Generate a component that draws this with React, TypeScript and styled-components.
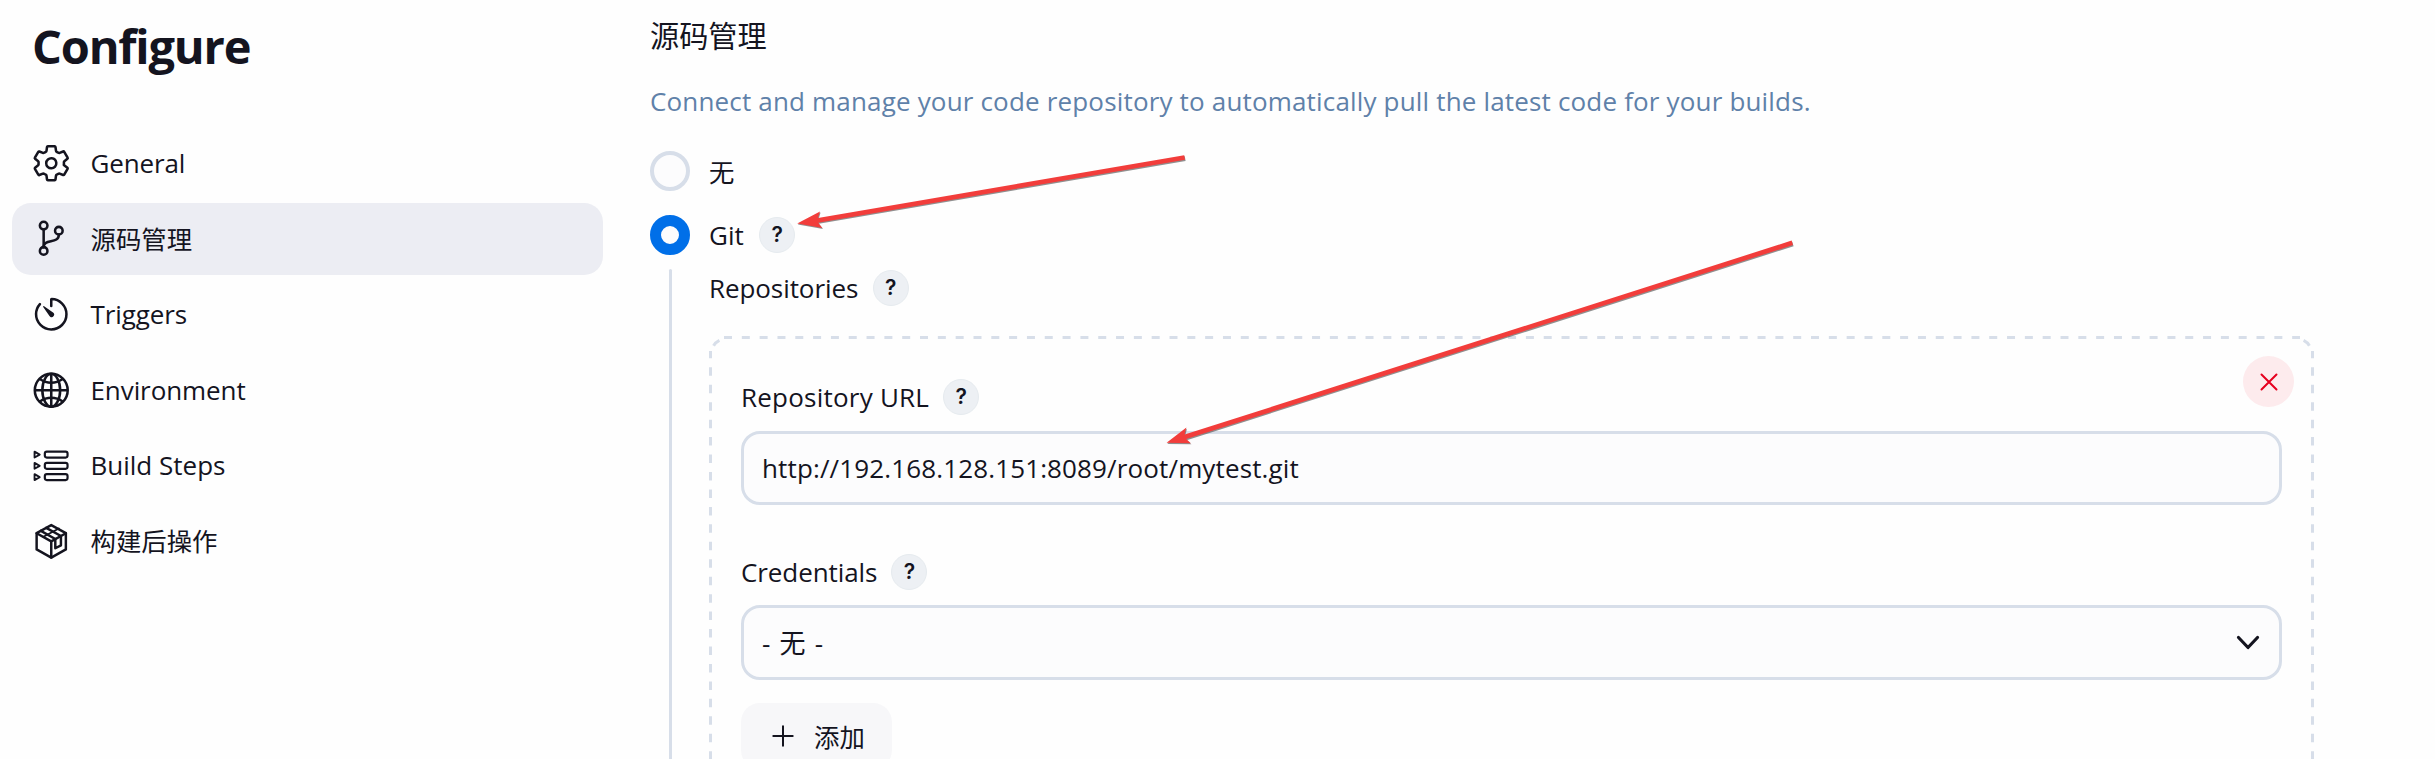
import React from 'react';
import styled, { createGlobalStyle } from 'styled-components';
import {
  IoSettingsOutline,
  IoGitBranchOutline,
  IoTimerOutline,
  IoGlobeOutline,
} from 'react-icons/io5';

const ink = '#14141f';
const line = '#d7dee9';
const sans = '"Open Sans", "Noto Sans CJK SC", sans-serif';

const GlobalStyle = createGlobalStyle`
  * { box-sizing: border-box; }
  body { margin: 0; background: #fefefe; overflow: hidden; }
`;

const Page = styled.div`
  position: relative;
  display: flex;
  width: 2435px;
  height: 759px;
  overflow: hidden;
  color: ${ink};
  font: 400 26px/36px ${sans};
`;

const Sidebar = styled.aside`
  flex: none;
  width: 650px;
  padding: 16px 47px 0 12px;
`;

const PageTitle = styled.h1`
  margin: 0 0 51px 20px;
  font-size: 47px;
  line-height: 60px;
  font-weight: 700;
  letter-spacing: -1.2px;
`;

const Nav = styled.nav`
  display: flex;
  flex-direction: column;
  gap: 3.6px;
`;

const NavItem = styled.a<{ $active?: boolean }>`
  display: flex;
  align-items: center;
  gap: 19px;
  height: 72px;
  padding-left: 19px;
  border-radius: 19px;
  background: ${(p) => (p.$active ? '#ecedf3' : 'transparent')};

  svg {
    flex: none;
    width: 40.5px;
    height: 40.5px;
  }
`;

const Text = styled.span<{ $spacing?: number; $cjk?: boolean }>`
  white-space: pre;
  letter-spacing: ${(p) => p.$spacing ?? 0}px;
  ${(p) => p.$cjk && 'font-size: 25.4px; padding-top: 1px;'}
`;

const Main = styled.main`
  flex: none;
  width: 1664px;
  height: 759px;
  display: flex;
  flex-direction: column;
`;

const SectionTitle = styled.h2`
  margin: 14px 0 23px;
  font-size: 29.2px;
  line-height: 44px;
  font-weight: 400;
`;

const Description = styled.p`
  margin: 0 0 30px;
  line-height: 40px;
  letter-spacing: 0.17px;
  color: #5f81a9;
`;

const RadioRow = styled.label`
  display: flex;
  align-items: center;
  height: 40px;
  margin-bottom: 24px;
`;

const Radio = styled.span<{ $checked?: boolean }>`
  width: 40px;
  height: 40px;
  margin-right: 19px;
  border-radius: 50%;
  background: #fcfcfd;
  border: ${(p) => (p.$checked ? '11px solid #006fe8' : `4px solid ${line}`)};
`;

const HelpButton = styled.button<{ $gap: number }>`
  display: flex;
  align-items: center;
  justify-content: center;
  width: 36px;
  height: 36px;
  margin: 0 0 0 ${(p) => p.$gap}px;
  padding: 0;
  border: 1px solid #e6ebef;
  border-radius: 50%;
  background: #edf0f4;
  color: ${ink};
  font: 600 21px/34px Inter, sans-serif;
`;

const Nested = styled.div`
  display: flex;
  flex: 1;
  min-height: 0;
  margin-top: -10px;
  padding-left: 19px;
`;

const Rail = styled.div`
  flex: none;
  width: 3px;
  margin-right: 37px;
  border-radius: 2px 2px 0 0;
  background: ${line};
`;

const NestedBody = styled.div`
  flex: 1;
  padding-top: 1px;
`;

const LabelRow = styled.div`
  display: flex;
  align-items: center;
  height: 36px;
`;

const Panel = styled.section`
  position: relative;
  width: 1605px;
  height: 460px;
  margin-top: 30px;
  padding: 43px 32px 0;
`;

const DashedOutline = styled.svg`
  position: absolute;
  inset: 0;
  pointer-events: none;
`;

const RemoveButton = styled.button`
  position: absolute;
  top: 20px;
  right: 20px;
  display: grid;
  place-items: center;
  width: 51px;
  height: 51px;
  padding: 0;
  border: 0;
  border-radius: 50%;
  background: #fdebed;
`;

const UrlInput = styled.input`
  display: block;
  width: 100%;
  height: 74px;
  margin: 16px 0 49px;
  padding: 0 18px 1px;
  border: 3px solid ${line};
  border-radius: 19px;
  background: #fcfcfd;
  color: ${ink};
  font: 400 26px/36px ${sans};
  letter-spacing: 0.135px;
  outline: none;
`;

const SelectBox = styled.div`
  display: flex;
  align-items: center;
  justify-content: space-between;
  height: 75px;
  margin: 15px 0 23px;
  padding: 0 19px 0 18px;
  border: 3px solid ${line};
  border-radius: 19px;
  background: #fcfcfd;
  word-spacing: 2.4px;
`;

const AddButton = styled.button`
  display: flex;
  align-items: center;
  gap: 20px;
  width: 151px;
  height: 66px;
  padding: 0 0 0 31px;
  border: 0;
  border-radius: 19px;
  background: #f7f7f9;
  color: ${ink};
  font: 400 25.4px/36px ${sans};
`;

const Annotations = styled.svg`
  position: absolute;
  inset: 0;
  pointer-events: none;
`;

const StepsIcon = () => (
  <svg viewBox="0 0 41 41" fill="none" stroke="currentColor" strokeWidth="2.2" strokeLinejoin="round">
    {[9.7, 21.1, 32.5].map((y) => (
      <g key={y}>
        <path d={`M3.6 ${y - 3}v6l5.2-3z`} strokeWidth="1.9" />
        <rect x="14" y={y - 3} width="23" height="6" rx="2" />
      </g>
    ))}
  </svg>
);

const PackageIcon = () => (
  <svg viewBox="0 0 41 41" fill="none" stroke="currentColor" strokeWidth="2.5" strokeLinejoin="round" strokeLinecap="round">
    <path d="M20.5 4.1 35.3 12.2V28.8L20.5 37 5.7 28.8V12.2Z" />
    <path d="M5.7 12.4 20.5 20.6 35.3 12.4M20.5 20.6V37" />
    <path d="M10 10 24.6 18.2V27.6L30.3 24.6V15.2L15.4 7" />
    <path d="M12.6 16 28.2 7.6" strokeWidth="1.8" />
  </svg>
);

const navItems = [
  { label: 'General', icon: <IoSettingsOutline />, spacing: -0.13 },
  { label: '源码管理', icon: <IoGitBranchOutline />, active: true, cjk: true },
  { label: 'Triggers', icon: <IoTimerOutline />, spacing: -0.1 },
  { label: 'Environment', icon: <IoGlobeOutline />, spacing: -0.08 },
  { label: 'Build Steps', icon: <StepsIcon />, spacing: 0 },
  { label: '构建后操作', icon: <PackageIcon />, cjk: true },
];

const arrows = [
  'M1184.2 155.2 818 218 820 211.5 797.2 223.4 822.4 228 818.2 222.7 1185 159.8Z',
  'M1791.6 240.6 1184.6 434.6 1186.4 427.6 1166.6 442.8 1190.8 443.2 1186.2 439.1 1793 245.1Z',
];

const Help = ({ gap }: { gap: number }) => (
  <HelpButton type="button" $gap={gap}>?</HelpButton>
);

export default function App() {
  return (
    <Page>
      <GlobalStyle />
      <Sidebar>
        <PageTitle>Configure</PageTitle>
        <Nav>
          {navItems.map((item) => (
            <NavItem key={item.label} $active={item.active}>
              {item.icon}
              <Text $spacing={item.spacing} $cjk={item.cjk}>{item.label}</Text>
            </NavItem>
          ))}
        </Nav>
      </Sidebar>
      <Main>
        <SectionTitle>源码管理</SectionTitle>
        <Description>
          Connect and manage your code repository to automatically pull the latest code for your builds.
        </Description>
        <RadioRow>
          <Radio />
          <Text $cjk>无</Text>
        </RadioRow>
        <RadioRow>
          <Radio $checked />
          <Text>Git</Text>
          <Help gap={15.5} />
        </RadioRow>
        <Nested>
          <Rail />
          <NestedBody>
            <LabelRow>
              <Text $spacing={-0.08}>Repositories</Text>
              <Help gap={14.5} />
            </LabelRow>
            <Panel>
              <DashedOutline width="1605" height="460" fill="none" stroke={line} strokeWidth="3">
                <path d="M15 1.5H1591" strokeDasharray="8 9.82" />
                <path d="M1.5 15V22.3M1603.5 15V22.3" />
                <path d="M1.5 31.3V460M1603.5 31.3V460" strokeDasharray="8.5 8.95" />
                <path d="M4.6 9.8Q6.5 6.3 10.4 4.4M1600.4 9.8Q1598.5 6.3 1594.6 4.4" />
              </DashedOutline>
              <RemoveButton type="button">
                <svg width="18" height="18" fill="none" stroke="#e6001f" strokeWidth="2" strokeLinecap="round">
                  <path d="M1.5 1.5l15 15M16.5 1.5l-15 15" />
                </svg>
              </RemoveButton>
              <LabelRow>
                <Text $spacing={0.22}>Repository URL</Text>
                <Help gap={14} />
              </LabelRow>
              <UrlInput readOnly value="http://192.168.128.151:8089/root/mytest.git" />
              <LabelRow>
                <Text $spacing={-0.08}>Credentials</Text>
                <Help gap={14} />
              </LabelRow>
              <SelectBox>
                <Text>- 无 -</Text>
                <svg width="24" height="16" fill="none" stroke={ink} strokeWidth="3.2" strokeLinecap="round" strokeLinejoin="round">
                  <path d="M2.5 2.5 12 12.5 21.5 2.5" />
                </svg>
              </SelectBox>
              <AddButton type="button">
                <svg width="22" height="22" fill="none" stroke={ink} strokeWidth="2" strokeLinecap="round">
                  <path d="M11 1.3v19.4M1.3 11h19.4" />
                </svg>
                <Text $cjk>添加</Text>
              </AddButton>
            </Panel>
          </NestedBody>
        </Nested>
      </Main>
      <Annotations width="2435" height="759">
        {arrows.map((d) => (
          <g key={d}>
            <path d={d} fill="#555" fillOpacity="0.65" transform="translate(0.6 1.1)" />
            <path d={d} fill="#f23d3b" />
          </g>
        ))}
      </Annotations>
    </Page>
  );
}
